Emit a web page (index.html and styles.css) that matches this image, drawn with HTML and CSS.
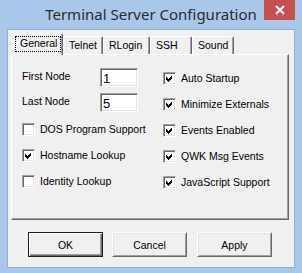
FILE: index.html
```html
<!DOCTYPE html>
<html lang="en">
<head>
    <meta charset="UTF-8">
    <title>Terminal Server Configuration</title>
    <link rel="stylesheet" href="styles.css">
</head>
<body>
    <div class="window">
        <div class="titlebar">
            <span class="title">Terminal Server Configuration</span>
            <span class="close">
                <svg width="10" height="10" viewBox="0 0 10 10">
                    <path d="M1 1 L9 9 M9 1 L1 9" stroke="#fff" stroke-width="2" fill="none"/>
                </svg>
            </span>
        </div>
        <div class="client">
            <div class="tabs">
                <div class="tab active tab-general"><span class="focus">General</span></div>
                <div class="tab tab-telnet">Telnet</div>
                <div class="tab tab-rlogin">RLogin</div>
                <div class="tab tab-ssh">SSH</div>
                <div class="tab tab-sound">Sound</div>
            </div>
            <div class="panel">
                <div class="col col-left">
                    <div class="fields">
                        <div class="field"><span class="field-label">First Node</span><span class="edit">1</span></div>
                        <div class="field"><span class="field-label">Last Node</span><span class="edit">5</span></div>
                    </div>
                    <div class="checks">
                        <div class="check"><span class="box"></span>DOS Program Support</div>
                        <div class="check"><span class="box checked"></span>Hostname Lookup</div>
                        <div class="check"><span class="box"></span>Identity Lookup</div>
                    </div>
                </div>
                <div class="col col-right">
                    <div class="checks">
                        <div class="check"><span class="box checked"></span>Auto Startup</div>
                        <div class="check"><span class="box checked"></span>Minimize Externals</div>
                        <div class="check"><span class="box checked"></span>Events Enabled</div>
                        <div class="check"><span class="box checked"></span>QWK Msg Events</div>
                        <div class="check"><span class="box checked"></span>JavaScript Support</div>
                    </div>
                </div>
            </div>
            <div class="buttons">
                <button class="btn default">OK</button>
                <button class="btn">Cancel</button>
                <button class="btn btn-apply">Apply</button>
            </div>
        </div>
    </div>
</body>
</html>
```

FILE: styles.css
```css
body {
    margin: 0;
    font-family: "Liberation Sans", Arial, sans-serif;
    font-size: 10.5px;
    color: #000;
}

.window {
    width: 302px;
    height: 273px;
    box-sizing: border-box;
    background-color: #a9c8e9;
    padding: 0 7px 8px;
}

.titlebar {
    position: relative;
    height: 29px;
}

.title {
    display: block;
    text-align: center;
    font-family: "Noto Sans", sans-serif;
    font-size: 15px;
    line-height: 29px;
    color: #2b2b2b;
}

.close {
    position: absolute;
    top: 0;
    right: 0;
    width: 31px;
    height: 20px;
    background-color: #c75050;
    display: flex;
    align-items: center;
    justify-content: center;
}

.client {
    height: 234px;
    border: 1px solid #8fb0d8;
    background-color: #f0f0f0;
    padding: 3px 5px 0 3px;
    box-sizing: content-box;
}

/* tab strip */
.tabs {
    display: flex;
    align-items: flex-end;
    height: 21px;
    padding-left: 2px;
}

.tab {
    box-sizing: border-box;
    height: 18px;
    border-top: 1px solid #fff;
    border-left: 1px solid #fff;
    border-right: 1px solid #696969;
    border-radius: 2px 2px 0 0;
    box-shadow: inset -1px 0 #a0a0a0;
    padding-left: 5px;
    line-height: 16px;
}

.tab.active {
    position: relative;
    z-index: 1;
    height: 22px;
    margin-bottom: -1px;
    background-color: #f0f0f0;
    padding: 2px 1px 0 1px;
}

.focus {
    display: block;
    height: 16px;
    box-sizing: border-box;
    border: 1px dotted #000;
    padding-left: 4px;
    line-height: 13px;
}

.tab-general { width: 50px; }
.tab-telnet { width: 40px; }
.tab-rlogin { width: 47px; }
.tab-ssh { width: 42px; }
.tab-sound { width: 42px; }

.panel {
    box-sizing: border-box;
    height: 166px;
    border: 1px solid;
    border-color: #fff #696969 #696969 #fff;
    box-shadow: inset -1px -1px #a0a0a0;
    display: grid;
    grid-template-columns: 141px 1fr;
    padding: 13px 0 0 10px;
}

.col-left {
    display: flex;
    flex-direction: column;
    gap: 11px;
}

.col-right {
    padding-top: 4px;
}

.fields {
    display: flex;
    flex-direction: column;
    gap: 6px;
}

.field {
    display: flex;
    align-items: center;
    height: 19px;
}

.field-label {
    width: 78px;
    margin-top: -4px;
}

.edit {
    box-sizing: border-box;
    width: 38px;
    height: 19px;
    background-color: #fff;
    border: 1px solid;
    border-color: #a0a0a0 #fff #fff #a0a0a0;
    box-shadow: inset 1px 1px #696969, inset -1px -1px #e3e3e3;
    padding: 2px 0 0 2px;
    font-size: 13px;
    line-height: 15px;
}

.checks {
    display: flex;
    flex-direction: column;
    gap: 13px;
}

.check {
    display: flex;
    align-items: center;
    gap: 5px;
    height: 13px;
    line-height: 13px;
}

.box {
    box-sizing: border-box;
    width: 13px;
    height: 13px;
    flex: none;
    background-color: #fff;
    border: 1px solid;
    border-color: #a0a0a0 #fff #fff #a0a0a0;
    box-shadow: inset 1px 1px #696969, inset -1px -1px #e3e3e3;
}

.box.checked {
    background: #fff url("data:image/svg+xml,%3Csvg xmlns='http://www.w3.org/2000/svg' width='11' height='11' viewBox='0 0 11 11' shape-rendering='crispEdges'%3E%3Cpath d='M2 4 L4 6 L8 2 L8 5 L4 9 L2 7 Z' fill='%23000'/%3E%3C/svg%3E") no-repeat 0 0;
}

/* dialog buttons */
.buttons {
    display: flex;
    gap: 9px;
    margin: 12px 0 0 17px;
}

.btn {
    box-sizing: border-box;
    width: 75px;
    height: 25px;
    padding: 0;
    font-family: "Liberation Sans", Arial, sans-serif;
    font-size: 10.5px;
    color: #000;
    background-color: #f0f0f0;
    border: 1px solid;
    border-color: #fff #696969 #696969 #fff;
    box-shadow: inset 1px 1px #e3e3e3, inset -1px -1px #a0a0a0;
}

.btn.default {
    border-color: #1e1e1e;
    box-shadow: inset 1px 1px #fff, inset -1px -1px #696969, inset -2px -2px #a0a0a0;
}

.btn-apply {
    margin-left: 1px;
}
```
